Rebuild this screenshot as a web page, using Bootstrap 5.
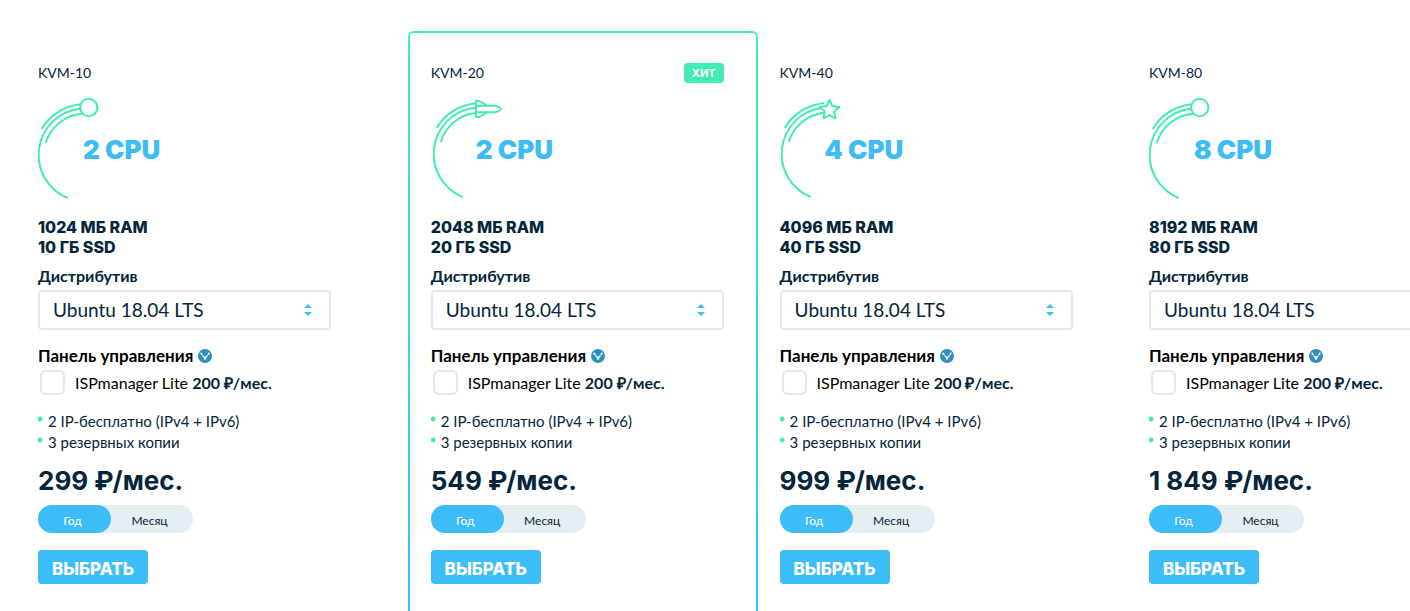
<!DOCTYPE html>
<html lang="ru">
<head>
<meta charset="utf-8">
<meta name="viewport" content="width=device-width, initial-scale=1">
<title>Тарифы KVM</title>
<link href="https://cdn.jsdelivr.net/npm/bootstrap@5.3.0/dist/css/bootstrap.min.css" rel="stylesheet">
<style>
:root { --ink: #04253a; --sky: #3dbdf7; --mint: #43ebb4; --mist: #e5eef3; }
body { font-family: Lato, "Open Sans", sans-serif; font-size: 16px; line-height: 20px; color: var(--ink); background: #fff; }
.tariffs { display: grid; grid-template-columns: 28.1% 25.1% 26.5% 26.5%; padding: 31px 0 0 16px; }
.tariff { padding: 30px 20px 60px; border: 2px solid transparent; min-width: 0; }
.tariff-hit { padding-left: 21px; border-radius: 6px; background: linear-gradient(#fff, #fff) padding-box, linear-gradient(var(--mint), var(--sky) 90%) border-box; }
.tariff-inner { width: 293px; }
.plan-head { margin-bottom: 14px; }
.plan-name { font-size: 14px; line-height: 20px; font-weight: 400; margin: 0; }
.hit { background: var(--mint); font: 700 11px/20px Inter, sans-serif; padding: 0 8px; border-radius: 4px; color: #fff; }
.plan-cpu { margin-bottom: 14px; }
.comet { width: 72px; height: 106px; fill: none; stroke: var(--mint); stroke-width: 2; }
.solid { fill: #fff; stroke-linejoin: round; }
.cpu { font: 900 26px/32px Inter, sans-serif; color: var(--sky); margin-left: -27px; }
.specs { font: 800 16px/20px Inter, sans-serif; margin-bottom: 9px; }
.distro { height: 40px; border: 2px solid #e3e8ec; border-radius: 4px; color: var(--ink); font-size: 19px; line-height: 24px; padding: 4px 32px 4px 13px; background: #fff; appearance: none; }
.arrows { right: 19px; top: 14px; width: 8px; height: 12px; fill: var(--sky); pointer-events: none; }
.panel-title { font-size: 17px; gap: 5px; }
.tick { width: 25px; height: 25px; margin: 0 10px 0 2px; border: 2px solid #e3e8ec; border-radius: 6px !important; }
.isp b { color: var(--ink); }
.perks { line-height: 21px; font-size: 15px; margin-bottom: 12px; }
.perks li { padding-left: 10px; background: radial-gradient(circle at 2px 8px, var(--mint) 2px, transparent 3px); }
.price { font: 700 26px/32px Inter, sans-serif; }
.period { background: var(--mist); border-radius: 14px; width: 155px; height: 28px; margin-bottom: 17px; }
.period label { font-size: 12px; line-height: 28px; padding-top: 2px; border-radius: 14px; text-align: center; cursor: pointer; height: 28px; }
.period label:first-of-type { width: 73px; padding-right: 4px; }
.period label:last-of-type { width: 77px; }
.period .btn-check:checked + label { background: var(--sky); color: #fff; }
.choose { font: 800 17px/24px Inter, sans-serif; color: #fff; background: var(--sky); border: 0; border-radius: 4px; width: 110px; padding: 7px 0 3px; }
.choose:hover { background: #24ace9; color: #fff; }
</style>
</head>
<body>
<svg class="d-none" aria-hidden="true">
  <symbol id="trail" viewBox="0 0 72 106">
    <path d="M42 11.7A46.5 46.5 0 0 0 29.7 101M43 7.3A50.7 50.7 0 0 0 3.7 32M44 16.7A41.3 41.3 0 0 0 7.7 46"/>
  </symbol>
  <symbol id="info" viewBox="0 0 14 14">
    <circle cx="7" cy="7" r="7" fill="#2f8fc3"/>
    <path d="M3.500 5 5.500 7.500 7 10.500 8.500 7.500 10.500 5" fill="none" stroke="#fff" stroke-width="1.300" stroke-dasharray="1.700 .7"/>
    <path d="M4.800 7h1.500l.7 1 .7-1h1.500L7 11z" fill="#fff"/>
    <circle cx="3.200" cy="4.500" r=".9" fill="#fff"/><circle cx="10.800" cy="4.500" r=".9" fill="#fff"/>
  </symbol>
  <symbol id="updown" viewBox="0 0 8 12"><path d="M4 0 8 4H0zM4 12 0 8h8z"/></symbol>
</svg>

<main class="overflow-hidden">
<div class="tariffs">

<section class="tariff"><div class="tariff-inner">
  <div class="plan-head"><h2 class="plan-name">KVM-10</h2></div>
  <div class="plan-cpu d-flex align-items-center">
    <svg class="comet flex-shrink-0" viewBox="0 0 72 106" aria-hidden="true"><use href="#trail" width="72" height="106"/><circle class="solid" cx="50.7" cy="10.5" r="8.7"/></svg>
    <div class="cpu">2 CPU</div>
  </div>
  <p class="specs">1024 МБ RAM<br>10 ГБ SSD</p>
  <label class="fw-bold d-block mb-1" for="os10">Дистрибутив</label>
  <div class="position-relative mb-3">
    <select class="distro w-100" id="os10"><option>Ubuntu 18.04 LTS</option></select>
    <svg class="arrows position-absolute" aria-hidden="true"><use href="#updown"/></svg>
  </div>
  <div class="panel-title fw-bold text-black d-flex align-items-center">Панель управления<svg width="14" height="14" aria-hidden="true"><use href="#info"/></svg></div>
  <div class="d-flex align-items-center mb-3 pt-1">
    <input class="form-check-input tick" type="checkbox" id="isp10">
    <label class="isp text-black" for="isp10">ISPmanager Lite <b>200 ₽/мес.</b></label>
  </div>
  <ul class="perks list-unstyled"><li>2 IP-бесплатно (IPv4 + IPv6)</li><li>3 резервных копии</li></ul>
  <div class="price mb-2">299 ₽/мес.</div>
  <div class="period d-flex">
    <input class="btn-check" type="radio" name="p10" id="y10" checked><label for="y10">Год</label>
    <input class="btn-check" type="radio" name="p10" id="m10"><label for="m10">Месяц</label>
  </div>
  <button class="btn choose" type="button">ВЫБРАТЬ</button>
</div></section>

<section class="tariff tariff-hit"><div class="tariff-inner">
  <div class="plan-head d-flex justify-content-between"><h2 class="plan-name">KVM-20</h2><span class="hit">ХИТ</span></div>
  <div class="plan-cpu d-flex align-items-center">
    <svg class="comet flex-shrink-0" viewBox="0 0 72 106" aria-hidden="true"><use href="#trail" x="2" y="-1" width="72" height="106"/><path class="solid" d="M45 4h3.5l7.5 4.5v7L48.5 20H45z"/><path class="solid" d="M45 8.700h19q4 .6 6 3.300-2 2.700-6 3.300H45z"/></svg>
    <div class="cpu">2 CPU</div>
  </div>
  <p class="specs">2048 МБ RAM<br>20 ГБ SSD</p>
  <label class="fw-bold d-block mb-1" for="os20">Дистрибутив</label>
  <div class="position-relative mb-3">
    <select class="distro w-100" id="os20"><option>Ubuntu 18.04 LTS</option></select>
    <svg class="arrows position-absolute" aria-hidden="true"><use href="#updown"/></svg>
  </div>
  <div class="panel-title fw-bold text-black d-flex align-items-center">Панель управления<svg width="14" height="14" aria-hidden="true"><use href="#info"/></svg></div>
  <div class="d-flex align-items-center mb-3 pt-1">
    <input class="form-check-input tick" type="checkbox" id="isp20">
    <label class="isp text-black" for="isp20">ISPmanager Lite <b>200 ₽/мес.</b></label>
  </div>
  <ul class="perks list-unstyled"><li>2 IP-бесплатно (IPv4 + IPv6)</li><li>3 резервных копии</li></ul>
  <div class="price mb-2">549 ₽/мес.</div>
  <div class="period d-flex">
    <input class="btn-check" type="radio" name="p20" id="y20" checked><label for="y20">Год</label>
    <input class="btn-check" type="radio" name="p20" id="m20"><label for="m20">Месяц</label>
  </div>
  <button class="btn choose" type="button">ВЫБРАТЬ</button>
</div></section>

<section class="tariff"><div class="tariff-inner">
  <div class="plan-head"><h2 class="plan-name">KVM-40</h2></div>
  <div class="plan-cpu d-flex align-items-center">
    <svg class="comet flex-shrink-0" viewBox="0 0 72 106" aria-hidden="true"><use href="#trail" x="1" y="-1" width="72" height="106"/><path class="solid" d="m49.5 3 2.800 5.900 7 1-5.100 4.700 1.300 6.700-6-3.200-6 3.200 1.300-6.700-5.100-4.700 7-1z"/></svg>
    <div class="cpu">4 CPU</div>
  </div>
  <p class="specs">4096 МБ RAM<br>40 ГБ SSD</p>
  <label class="fw-bold d-block mb-1" for="os40">Дистрибутив</label>
  <div class="position-relative mb-3">
    <select class="distro w-100" id="os40"><option>Ubuntu 18.04 LTS</option></select>
    <svg class="arrows position-absolute" aria-hidden="true"><use href="#updown"/></svg>
  </div>
  <div class="panel-title fw-bold text-black d-flex align-items-center">Панель управления<svg width="14" height="14" aria-hidden="true"><use href="#info"/></svg></div>
  <div class="d-flex align-items-center mb-3 pt-1">
    <input class="form-check-input tick" type="checkbox" id="isp40">
    <label class="isp text-black" for="isp40">ISPmanager Lite <b>200 ₽/мес.</b></label>
  </div>
  <ul class="perks list-unstyled"><li>2 IP-бесплатно (IPv4 + IPv6)</li><li>3 резервных копии</li></ul>
  <div class="price mb-2">999 ₽/мес.</div>
  <div class="period d-flex">
    <input class="btn-check" type="radio" name="p40" id="y40" checked><label for="y40">Год</label>
    <input class="btn-check" type="radio" name="p40" id="m40"><label for="m40">Месяц</label>
  </div>
  <button class="btn choose" type="button">ВЫБРАТЬ</button>
</div></section>

<section class="tariff"><div class="tariff-inner">
  <div class="plan-head"><h2 class="plan-name">KVM-80</h2></div>
  <div class="plan-cpu d-flex align-items-center">
    <svg class="comet flex-shrink-0" viewBox="0 0 72 106" aria-hidden="true"><use href="#trail" width="72" height="106"/><circle class="solid" cx="50.7" cy="10.5" r="8.7"/></svg>
    <div class="cpu">8 CPU</div>
  </div>
  <p class="specs">8192 МБ RAM<br>80 ГБ SSD</p>
  <label class="fw-bold d-block mb-1" for="os80">Дистрибутив</label>
  <div class="position-relative mb-3">
    <select class="distro w-100" id="os80"><option>Ubuntu 18.04 LTS</option></select>
    <svg class="arrows position-absolute" aria-hidden="true"><use href="#updown"/></svg>
  </div>
  <div class="panel-title fw-bold text-black d-flex align-items-center">Панель управления<svg width="14" height="14" aria-hidden="true"><use href="#info"/></svg></div>
  <div class="d-flex align-items-center mb-3 pt-1">
    <input class="form-check-input tick" type="checkbox" id="isp80">
    <label class="isp text-black" for="isp80">ISPmanager Lite <b>200 ₽/мес.</b></label>
  </div>
  <ul class="perks list-unstyled"><li>2 IP-бесплатно (IPv4 + IPv6)</li><li>3 резервных копии</li></ul>
  <div class="price mb-2">1 849 ₽/мес.</div>
  <div class="period d-flex">
    <input class="btn-check" type="radio" name="p80" id="y80" checked><label for="y80">Год</label>
    <input class="btn-check" type="radio" name="p80" id="m80"><label for="m80">Месяц</label>
  </div>
  <button class="btn choose" type="button">ВЫБРАТЬ</button>
</div></section>

</div>
</main>
<script src="https://cdn.jsdelivr.net/npm/bootstrap@5.3.0/dist/js/bootstrap.bundle.min.js"></script>
</body>
</html>
